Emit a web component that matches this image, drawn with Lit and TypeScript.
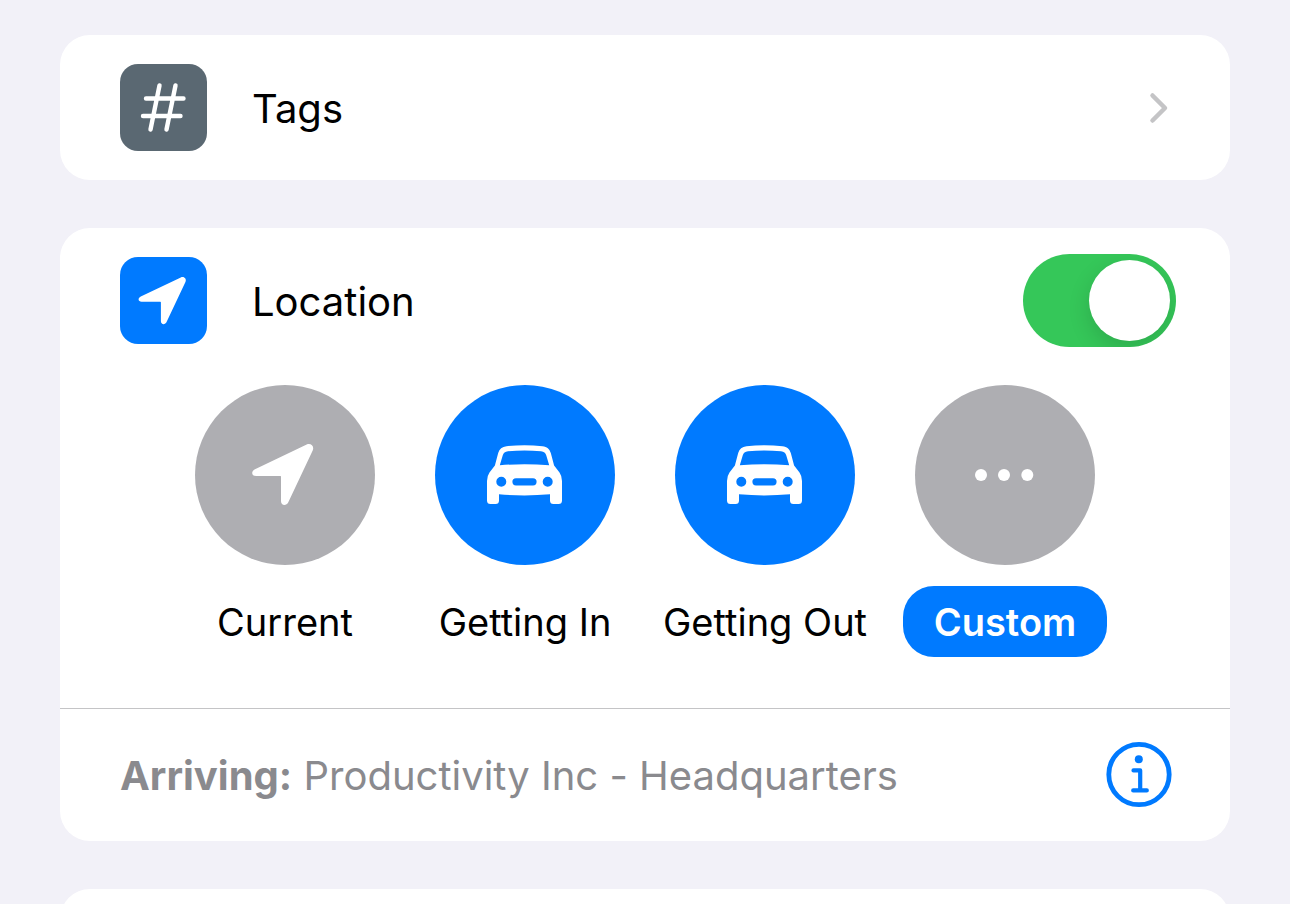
import { LitElement, html, css, svg } from "lit";
import { customElement, property, state } from "lit/decorators.js";

type IconName = "hash" | "arrow" | "car" | "dots" | "chevron" | "info";

const shapes = {
  hash: {
    box: "0 0 87 87",
    body: svg`<path d="M39.5 21.5 30.5 65.5M55.5 21.5 46.5 65.5M26 34.5H63.500M23 52H60.500"
      fill="none" stroke="currentColor" stroke-width="4.400" stroke-linecap="round"/>`,
  },
  arrow: {
    box: "2 0 62 62",
    body: svg`<path d="M3 25.300 54.700 .5C58.800-1.400 62.600 2.300 60.700 6.400L36.300 58.200C34.400 62.300 29 61.600 29 57.300V32.800C29 32.200 28.800 32 28.200 32H4C-.5 32-1.200 27.200 3 25.300Z" fill="currentColor"/>`,
  },
  car: {
    box: "0.5 0 76 60",
    body: svg`<path fill="currentColor" fill-rule="evenodd" d="M20 1.200Q38-.8 56 1.200C60.500 1.700 63 4 64.300 8L67.600 20.500 73 27.500Q75.500 31 75.500 36V55.500Q75.500 59 72 59H67Q63.500 59 63.500 55.500V49.300Q38 51.600 12.500 49.300V55.500Q12.500 59 9 59H4Q.5 59 .5 55.500V36Q.5 31 3 27.500L8.400 20.500 11.700 8C13 4 15.500 1.700 20 1.200ZM21.500 6.200C18.500 6.500 17 7.500 16.200 10.500L13.300 20.200Q38 18.200 62.700 20.200L59.800 10.500C59 7.500 57.500 6.500 54.500 6.200Q38 5 21.500 6.200ZM14.800 31.700A5 5 0 1 0 14.800 41.700 5 5 0 1 0 14.800 31.700ZM61.200 31.700A5 5 0 1 0 61.200 41.700 5 5 0 1 0 61.200 31.700ZM29.500 33.200A3.600 3.600 0 0 0 29.500 40.400H46.500A3.600 3.600 0 0 0 46.500 33.200Z"/>`,
  },
  dots: {
    box: "0 0 60 12",
    body: svg`<g fill="currentColor"><circle cx="6" cy="6" r="6"/><circle cx="29" cy="6" r="6"/><circle cx="52.300" cy="6" r="6"/></g>`,
  },
  chevron: {
    box: "0 0 18 30",
    body: svg`<path d="M2.500 2.500 15 15 2.500 27.500" fill="none" stroke="currentColor" stroke-width="4.500" stroke-linecap="round" stroke-linejoin="round"/>`,
  },
  info: {
    box: "0 0 66 66",
    body: svg`<circle cx="33" cy="32.500" r="30.200" fill="none" stroke="currentColor" stroke-width="4.800"/>
      <circle cx="32.800" cy="17.200" r="4" fill="currentColor"/>
      <path d="M27.500 28.400H34.200V48.400M27.200 48.400H40.800" fill="none" stroke="currentColor" stroke-width="4.200" stroke-linecap="round" stroke-linejoin="round"/>`,
  },
};

function icon(name: IconName) {
  const shape = shapes[name];
  return html`<svg class="icon ${name}" viewBox=${shape.box} aria-hidden="true">${shape.body}</svg>`;
}

const iconStyles = css`
  .icon { display: block; flex: none; overflow: visible; }
  .hash { width: 87px; height: 87px; }
  .arrow { width: 62px; height: 62px; }
  .car { width: 76px; height: 60px; }
  .dots { width: 60px; height: 12px; }
  .chevron { width: 18px; height: 30px; }
  .info { width: 66px; height: 66px; }
`;

@customElement("location-choice")
class LocationChoice extends LitElement {
  @property() label = "";
  @property() glyph: IconName = "arrow";
  @property({ type: Boolean }) filled = false;
  @property({ type: Boolean }) selected = false;

  static styles = [
    iconStyles,
    css`
      :host { display: block; }
      .choice {
        display: flex;
        flex-direction: column;
        align-items: center;
        gap: 21px;
        width: 100%;
        padding: 0;
        border: 0;
        background: none;
        color: #000;
        font: 400 38px/46px Inter, "Liberation Sans", sans-serif;
        white-space: nowrap;
        cursor: pointer;
      }
      .disc {
        display: grid;
        place-items: center;
        width: 180px;
        height: 180px;
        border-radius: 50%;
        background: #aeaeb2;
        color: #fff;
      }
      .disc.filled { background: #007aff; }
      .label { padding: 13px 31px 12px; border-radius: 31px; }
      .label.selected { background: #007aff; color: #fff; font-weight: 600; }
    `,
  ];

  render() {
    return html`
      <button class="choice" type="button" aria-pressed=${this.selected ? "true" : "false"}>
        <span class="disc ${this.filled ? "filled" : ""}">${icon(this.glyph)}</span>
        <span class="label ${this.selected ? "selected" : ""}">${this.label}</span>
      </button>
    `;
  }
}

@customElement("app-root")
class AppRoot extends LitElement {
  @state() private enabled = true;
  @state() private picked = "Custom";

  private choices: { label: string; glyph: IconName; filled: boolean }[] = [
    { label: "Current", glyph: "arrow", filled: false },
    { label: "Getting In", glyph: "car", filled: true },
    { label: "Getting Out", glyph: "car", filled: true },
    { label: "Custom", glyph: "dots", filled: false },
  ];

  static styles = [
    iconStyles,
    css`
      :host {
        display: block;
        height: 100vh;
        overflow-y: auto;
        scrollbar-width: none;
        background: #f2f1f8;
        color: #000;
        font: 400 40px/48px Inter, "Liberation Sans", sans-serif;
        font-feature-settings: "calt" 0;
      }
      .page {
        display: flex;
        flex-direction: column;
        gap: 48px;
        box-sizing: border-box;
        padding: 35px 60px;
      }
      .card {
        display: block;
        border-radius: 30px;
        background: #fff;
        color: inherit;
        text-decoration: none;
      }
      .blank { min-height: 145px; }
      .row {
        display: flex;
        align-items: center;
        gap: 45px;
        box-sizing: border-box;
        min-height: 145px;
        padding: 0 60px;
      }
      .switch-row { padding-right: 54px; }
      .title { flex: 1; padding-top: 2px; }
      .tile {
        display: grid;
        place-items: center;
        width: 87px;
        height: 87px;
        border-radius: 18px;
        color: #fff;
      }
      .slate { background: #5a6872; }
      .blue { background: #007aff; }
      .tile .arrow { width: 48px; height: 48px; }
      .chevron { color: #c4c4c6; margin-right: 2px; }
      .switch {
        appearance: none;
        display: flex;
        align-items: center;
        box-sizing: border-box;
        width: 153px;
        height: 93px;
        margin: 0;
        padding: 6px;
        border-radius: 47px;
        background: #e9e9eb;
        overflow: hidden;
        cursor: pointer;
      }
      .switch::before {
        content: "";
        width: 81px;
        height: 81px;
        border-radius: 50%;
        background: #fff;
        box-shadow: 0 8px 22px rgba(0, 0, 0, 0.14);
      }
      .switch:checked { justify-content: flex-end; background: #35c759; }
      .choices {
        display: grid;
        grid-template-columns: repeat(4, 240px);
        justify-content: center;
        padding: 12px 0 51px;
      }
      .detail {
        display: flex;
        align-items: center;
        justify-content: space-between;
        min-height: 132px;
        padding: 0 58px 0 60px;
        border-top: 1px solid #c4c4c6;
        color: #8a8a8e;
      }
      .place { margin: 0; padding-top: 2px; }
      .strong { font-weight: 700; }
      .info-button {
        padding: 0;
        border: 0;
        background: none;
        color: #007aff;
        cursor: pointer;
      }
    `,
  ];

  render() {
    return html`
      <main class="page">
        <a class="card" href="#tags">
          <span class="row">
            <span class="tile slate">${icon("hash")}</span>
            <span class="title">Tags</span>
            ${icon("chevron")}
          </span>
        </a>
        <section class="card">
          <div class="row switch-row">
            <span class="tile blue">${icon("arrow")}</span>
            <label class="title" for="location">Location</label>
            <input
              class="switch"
              id="location"
              type="checkbox"
              role="switch"
              .checked=${this.enabled}
              @change=${(e: Event) => (this.enabled = (e.target as HTMLInputElement).checked)}
            />
          </div>
          <div class="choices">
            ${this.choices.map(
              (c) => html`<location-choice
                label=${c.label}
                glyph=${c.glyph}
                ?filled=${c.filled}
                ?selected=${c.label === this.picked}
                @click=${() => (this.picked = c.label)}
              ></location-choice>`
            )}
          </div>
          <div class="detail">
            <p class="place"><b class="strong">Arriving:</b> Productivity Inc - Headquarters</p>
            <button class="info-button" type="button" aria-label="Location details">${icon("info")}</button>
          </div>
        </section>
        <section class="card blank"></section>
      </main>
    `;
  }
}
